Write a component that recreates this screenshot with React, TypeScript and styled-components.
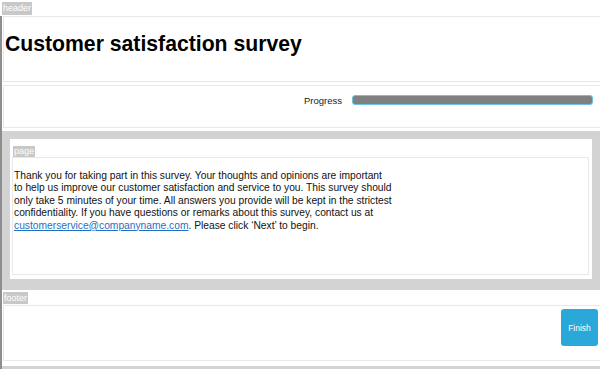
import React from "react";
import styled, { createGlobalStyle } from "styled-components";

const GlobalStyle = createGlobalStyle`
  html, body {
    margin: 0;
    padding: 0;
    background: #ffffff;
    overflow: hidden;
  }
  body {
    font-family: "Liberation Sans", Arial, sans-serif;
    color: #000000;
  }
`;

const Page = styled.div`
  width: 600px;
  height: 369px;
  overflow: hidden;
  display: flex;
  flex-direction: column;
`;

const Tag = styled.span<{ $indent?: number }>`
  align-self: flex-start;
  margin-left: ${({ $indent }) => $indent ?? 0}px;
  padding: 0 1px;
  background: #c8c8c8;
  color: #ffffff;
  font-size: 9px;
  line-height: 12px;
  height: 12px;
`;

const HeaderTag = styled(Tag)`
  margin-top: 2px;
  margin-bottom: 1px;
  height: 13px;
  line-height: 13px;
`;

const Frame = styled.div`
  flex: 1;
  display: flex;
  flex-direction: column;
  border-left: 2px solid #8e8e8e;
`;

const HeaderBox = styled.div`
  margin-left: 1px;
  height: 66px;
  box-sizing: border-box;
  border: 1px solid #e8e8e8;
  border-right: none;
  padding: 15px 0 0 1px;
`;

const Title = styled.h1`
  margin: 0;
  font-family: "Liberation Sans", Arial, sans-serif;
  font-weight: bold;
  font-size: 21.2px;
  line-height: 24px;
`;

const ProgressBox = styled.div`
  margin: 3px 0 0 1px;
  height: 43px;
  box-sizing: border-box;
  border: 1px solid #e8e8e8;
  border-right: none;
  padding: 9px 7px 0 0;
  display: flex;
  justify-content: flex-end;
  align-items: flex-start;
`;

const ProgressRow = styled.div`
  display: flex;
  align-items: center;
  gap: 10px;
  height: 10px;
`;

const ProgressLabel = styled.span`
  font-size: 9.5px;
  color: #222222;
`;

const ProgressBar = styled.div`
  width: 241px;
  height: 10px;
  box-sizing: border-box;
  border: 1px solid #6cc3e6;
  border-radius: 3px;
  background: #808080;
`;

const Band = styled.div`
  margin-top: 3px;
  background: #d3d3d3;
  padding: 8px 8px 11px 8px;
`;

const PagePanel = styled.div`
  height: 140px;
  box-sizing: border-box;
  background: #ffffff;
  padding: 7px 3px 4px 2px;
  display: flex;
  flex-direction: column;
`;

const PageTag = styled(Tag)`
  height: 11px;
  line-height: 11px;
`;

const ContentBox = styled.div`
  flex: 1;
  border: 1px solid #e8e8e8;
  padding: 12px 1px 0 1px;
`;

const Intro = styled.p`
  margin: 0;
  white-space: nowrap;
  font-size: 10.25px;
  line-height: 12.4px;
  color: #111111;
`;

const MailLink = styled.a`
  color: #1f6fc5;
  text-decoration: underline;
`;

const FooterArea = styled.div`
  display: flex;
  flex-direction: column;
  padding-top: 2px;
`;

const FooterTag = styled(Tag)`
  margin-bottom: 1px;
`;

const FooterBox = styled.div`
  margin-left: 1px;
  height: 56px;
  box-sizing: border-box;
  border: 1px solid #e8e8e8;
  border-right: none;
  padding: 3px 2px 0 0;
  display: flex;
  justify-content: flex-end;
  align-items: flex-start;
`;

const FinishButton = styled.button`
  width: 37px;
  height: 37px;
  border: none;
  border-radius: 3px;
  background: #29a8d9;
  color: #ffffff;
  font-family: "Liberation Sans", Arial, sans-serif;
  font-size: 8.5px;
  padding: 0;
  cursor: pointer;
`;

const BottomBand = styled.div`
  margin-top: 5px;
  flex: 1;
  background: #d3d3d3;
`;

export default function App() {
  return (
    <>
      <GlobalStyle />
      <Page>
        <HeaderTag $indent={2}>header</HeaderTag>
        <Frame>
          <HeaderBox>
            <Title>Customer satisfaction survey</Title>
          </HeaderBox>
          <ProgressBox>
            <ProgressRow>
              <ProgressLabel>Progress</ProgressLabel>
              <ProgressBar />
            </ProgressRow>
          </ProgressBox>
          <Band>
            <PagePanel>
              <PageTag $indent={1}>page</PageTag>
              <ContentBox>
                <Intro>
                  Thank you for taking part in this survey. Your thoughts and
                  opinions are important
                  <br />
                  to help us improve our customer satisfaction and service to
                  you. This survey should
                  <br />
                  only take 5 minutes of your time. All answers you provide
                  will be kept in the strictest
                  <br />
                  confidentiality. If you have questions or remarks about this
                  survey, contact us at
                  <br />
                  <MailLink href="#">customerservice@companyname.com</MailLink>.
                  Please click ‘Next’ to begin.
                </Intro>
              </ContentBox>
            </PagePanel>
          </Band>
          <FooterArea>
            <FooterTag $indent={1}>footer</FooterTag>
            <FooterBox>
              <FinishButton>Finish</FinishButton>
            </FooterBox>
          </FooterArea>
          <BottomBand />
        </Frame>
      </Page>
    </>
  );
}
